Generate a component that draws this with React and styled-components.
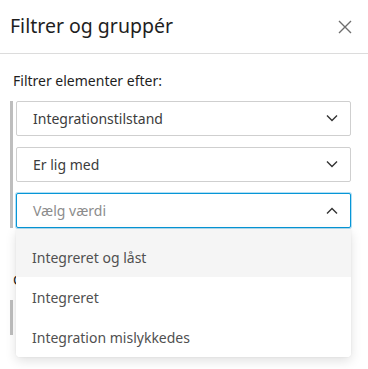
import React from 'react';
import styled, { createGlobalStyle } from 'styled-components';

const GlobalStyle = createGlobalStyle`
  html, body {
    margin: 0;
    padding: 0;
    background: #fff;
  }
  body {
    font-family: "Noto Sans", "Open Sans", sans-serif;
    color: #3c3c3c;
  }
`;

const Panel = styled.div`
  width: 368px;
  height: 369px;
  overflow: hidden;
  background: #fff;
`;

const Header = styled.div`
  height: 54px;
  display: flex;
  align-items: center;
  justify-content: space-between;
  padding: 0 14px 0 10px;
  border-bottom: 1px solid #dcdcdc;
  box-sizing: border-box;
`;

const Title = styled.h2`
  margin: 0 0 2px;
  font-size: 19.5px;
  font-weight: 400;
  color: #1e1e1e;
`;

const Close = styled.button`
  border: 0;
  background: none;
  padding: 0;
  width: 18px;
  height: 18px;
  display: flex;
  align-items: center;
  justify-content: center;
  cursor: pointer;
`;

const Body = styled.div`
  padding: 17px 17px 0 10px;
`;

const Section = styled.section`
  & + & {
    margin-top: 42px;
  }
`;

const Label = styled.div`
  font-size: 14px;
  color: #1e1e1e;
  padding-left: 3px;
  margin-bottom: 11px;
  line-height: 19px;
`;

const Group = styled.div`
  display: flex;
  flex-direction: column;
  gap: 11px;
  border-left: 3px solid #bebebe;
  padding-left: 3px;
`;

const Field = styled.div`
  position: relative;
`;

const Select = styled.div`
  height: 35px;
  box-sizing: border-box;
  display: flex;
  align-items: center;
  justify-content: space-between;
  padding: 0 12px 0 16px;
  border: 1px solid ${({ focused }) => (focused ? '#0696d7' : '#cfcfcf')};
  box-shadow: ${({ focused }) =>
    focused ? '0 0 0 1px rgba(6, 150, 215, 0.3)' : 'none'};
  border-radius: 2px;
  font-size: 14px;
  color: ${({ placeholder }) => (placeholder ? '#8c8c8c' : '#3c3c3c')};
  background: #fff;
`;

const Menu = styled.ul`
  position: absolute;
  top: 36px;
  left: 0;
  right: 0;
  margin: 0;
  padding: 0;
  list-style: none;
  background: #fff;
  border-radius: 0 0 4px 4px;
  box-shadow: 0 4px 12px rgba(0, 0, 0, 0.12), 0 0 2px rgba(0, 0, 0, 0.08);
  z-index: 2;
  overflow: hidden;
`;

const Option = styled.li`
  height: 40px;
  display: flex;
  align-items: center;
  padding: 0 16px;
  font-size: 14px;
  color: #505050;
  background: ${({ active }) => (active ? '#f5f5f5' : '#fff')};
  &:first-child {
    height: 48px;
    padding-top: 8px;
    box-sizing: border-box;
  }
`;

const Chevron = ({ up }) => (
  <svg width="12" height="7" viewBox="0 0 12 7">
    <path
      d={up ? 'M1 6.5 L6 1.5 L11 6.5' : 'M1 0.5 L6 5.5 L11 0.5'}
      fill="none"
      stroke="#333"
      strokeWidth="1.4"
    />
  </svg>
);

const options = ['Integreret og låst', 'Integreret', 'Integration mislykkedes'];

export default function App() {
  return (
    <Panel>
      <GlobalStyle />
      <Header>
        <Title>Filtrer og gruppér</Title>
        <Close aria-label="Luk">
          <svg width="14" height="14" viewBox="0 0 14 14">
            <path d="M1 1 L13 13 M13 1 L1 13" stroke="#6e6e6e" strokeWidth="1.4" />
          </svg>
        </Close>
      </Header>
      <Body>
        <Section>
          <Label>Filtrer elementer efter:</Label>
          <Group>
            <Select>
              Integrationstilstand
              <Chevron />
            </Select>
            <Select>
              Er lig med
              <Chevron />
            </Select>
            <Field>
              <Select focused placeholder>
                Vælg værdi
                <Chevron up />
              </Select>
              <Menu>
                {options.map((o, i) => (
                  <Option key={o} active={i === 0}>
                    {o}
                  </Option>
                ))}
              </Menu>
            </Field>
          </Group>
        </Section>
        <Section>
          <Label>Gruppér efter:</Label>
          <Group>
            <Select>
              Ingen
              <Chevron />
            </Select>
          </Group>
        </Section>
      </Body>
    </Panel>
  );
}
